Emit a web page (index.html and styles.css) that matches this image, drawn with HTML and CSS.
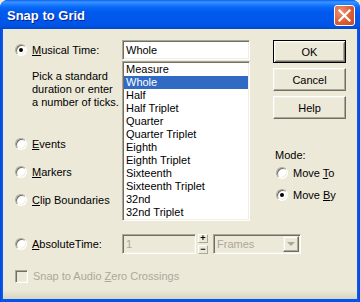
FILE: index.html
```html
<!DOCTYPE html>
<html>
<head>
    <title>Snap to Grid</title>
    <link rel="stylesheet" href="styles.css">
</head>
<body>
    <div class="window">
        <!-- Title bar -->
        <div class="titlebar">
            <span class="title">Snap to Grid</span>
            <button class="close-btn">
                <svg width="19" height="19" viewBox="0 0 19 19">
                    <path d="M4.5 4.5 L14.5 14.5 M14.5 4.5 L4.5 14.5" stroke="#fff" stroke-width="2.2" stroke-linecap="square"/>
                </svg>
            </button>
        </div>

        <!-- Dialog body -->
        <div class="client">
            <div class="main">
                <div class="left-col">
                    <div class="radio-row"><span class="radio checked"></span><span><u>M</u>usical Time:</span></div>
                    <p class="hint">Pick a standard<br>duration or enter<br>a number of ticks.</p>
                    <div class="radio-row events"><span class="radio"></span><span><u>E</u>vents</span></div>
                    <div class="radio-row spaced"><span class="radio"></span><span><u>M</u>arkers</span></div>
                    <div class="radio-row spaced"><span class="radio"></span><span><u>C</u>lip Boundaries</span></div>
                </div>

                <div class="mid-col">
                    <div class="edit">Whole</div>
                    <ul class="listbox">
                        <li>Measure</li>
                        <li class="selected">Whole</li>
                        <li>Half</li>
                        <li>Half Triplet</li>
                        <li>Quarter</li>
                        <li>Quarter Triplet</li>
                        <li>Eighth</li>
                        <li>Eighth Triplet</li>
                        <li>Sixteenth</li>
                        <li>Sixteenth Triplet</li>
                        <li>32nd</li>
                        <li>32nd Triplet</li>
                    </ul>
                </div>

                <div class="right-col">
                    <button class="btn default">OK</button>
                    <button class="btn">Cancel</button>
                    <button class="btn">Help</button>
                    <div class="mode">
                        <div class="mode-label">Mode:</div>
                        <div class="radio-row move-to"><span class="radio"></span><span>Move <u>T</u>o</span></div>
                        <div class="radio-row move-by"><span class="radio checked"></span><span>Move <u>B</u>y</span></div>
                    </div>
                </div>
            </div>

            <div class="abs-row">
                <div class="radio-row abs-label"><span class="radio"></span><span><u>A</u>bsoluteTime:</span></div>
                <div class="spin-edit">1</div>
                <div class="spin">
                    <span class="spin-btn">+</span>
                    <span class="spin-btn">&minus;</span>
                </div>
                <div class="combo">
                    <span class="combo-text">Frames</span>
                    <span class="combo-arrow"><span class="tri"></span></span>
                </div>
            </div>

            <div class="check-row">
                <span class="checkbox"></span>
                <span class="disabled">Snap to Audio <u>Z</u>ero Crossings</span>
            </div>
        </div>
    </div>
</body>
</html>
```

FILE: styles.css
```css
body {
    margin: 0;
    background: #ECE9D8;
    font-family: "Liberation Sans", Arial, sans-serif;
    font-size: 11px;
    color: #000;
}
.window {
    width: 360px;
    height: 302px;
    display: flex;
    flex-direction: column;
    background: linear-gradient(to right, #0841D0 0, #0A5AEE 2px, #0055EA 4px, #0055EA 356px, #0A5AEE 358px, #0841D0 360px);
    border-radius: 8px 8px 0 0;
    overflow: hidden;
}
.titlebar {
    height: 29px;
    flex: none;
    display: flex;
    justify-content: space-between;
    align-items: flex-start;
    padding: 0 5px 0 7px;
    background: linear-gradient(to bottom, #0A5CF0 0, #3C95FF 2px, #2284FF 4px, #0A6AF8 7px, #0059EE 12px, #0056E9 22px, #0053E4 26px, #0047D0 29px);
}
.title {
    margin-top: 8px;
    color: #fff;
    font-weight: bold;
    font-size: 13px;
    line-height: 16px;
    text-shadow: 1px 1px #0A1E8A;
}
.close-btn {
    margin-top: 5px;
    width: 21px;
    height: 21px;
    padding: 0;
    border: 1px solid #fff;
    border-radius: 3px;
    background: radial-gradient(circle at 30% 30%, #EE9372 0%, #DC5E38 55%, #C7461F 100%);
    display: flex;
    align-items: center;
    justify-content: center;
}
.close-btn svg { display: block; }

.client {
    flex: 1;
    margin: 0 3px 3px;
    padding-top: 11px;
    background: linear-gradient(to bottom, #ECE9D8 0, #ECE9D8 calc(100% - 9px), #D9D4C2 100%);
}
.main {
    display: flex;
    align-items: flex-start;
}

/* radios */
.radio-row {
    display: flex;
    align-items: center;
    gap: 5px;
    height: 20px;
    white-space: nowrap;
}
.radio {
    flex: none;
    position: relative;
    width: 12px;
    height: 12px;
    box-sizing: border-box;
    border-radius: 50%;
    background: #fff;
    border: 1px solid;
    border-color: #ACA899 #fff #fff #ACA899;
    box-shadow: inset 1px 1px #716F64, inset -1px -1px #F1EFE2;
}
.radio.checked::after {
    content: "";
    position: absolute;
    left: 3px;
    top: 3px;
    width: 4px;
    height: 4px;
    border-radius: 50%;
    background: #000;
}

.left-col {
    width: 107px;
    margin-left: 12px;
}
.hint {
    margin: 10px 0 0 17px;
    line-height: 13px;
}
.events { margin-top: 25px; }
.spaced { margin-top: 8px; }

/* sunken fields */
.edit, .listbox, .spin-edit, .combo {
    box-sizing: border-box;
    border: 1px solid;
    border-color: #ACA899 #fff #fff #ACA899;
    box-shadow: inset 1px 1px #716F64, inset -1px -1px #F1EFE2;
}
.mid-col { width: 128px; }
.edit {
    height: 20px;
    background: #fff;
    padding: 0 3px;
    line-height: 18px;
}
.listbox {
    margin: 1px 0 0;
    padding: 1px;
    list-style: none;
    height: 160px;
    background: #fff;
}
.listbox li {
    height: 13px;
    line-height: 13px;
    padding-left: 2px;
}
.listbox li.selected {
    background: #316AC5;
    color: #fff;
}

/* buttons */
.right-col {
    width: 73px;
    margin-left: 23px;
}
.btn {
    display: block;
    width: 73px;
    height: 23px;
    box-sizing: border-box;
    margin: 0 0 5px;
    padding: 0;
    font: inherit;
    color: #000;
    background: #ECE9D8;
    border: 1px solid;
    border-color: #fff #716F64 #716F64 #fff;
    box-shadow: inset -1px -1px #ACA899, inset 1px 1px #F1EFE2;
}
.btn.default {
    border-color: #000;
    box-shadow: inset 1px 1px #fff, inset -1px -1px #716F64, inset 2px 2px #F1EFE2, inset -2px -2px #ACA899;
}
.mode { margin-top: 30px; }
.mode-label {
    padding-left: 2px;
    line-height: 13px;
}
.mode .radio-row { padding-left: 3px; }
.move-to { margin-top: 1px; }
.move-by { margin-top: 2px; }

/* absolute time row */
.abs-row {
    display: flex;
    align-items: center;
    height: 20px;
    margin: 13px 0 0 12px;
}
.abs-label { width: 107px; }
.spin-edit {
    width: 74px;
    height: 20px;
    padding-left: 3px;
    line-height: 18px;
    color: #ACA899;
    background: #ECE9D8;
}
.spin {
    width: 10px;
    height: 20px;
    margin-left: 2px;
    display: flex;
    flex-direction: column;
    justify-content: space-between;
}
.spin-btn {
    height: 9px;
    box-sizing: border-box;
    border: 1px solid;
    border-color: #fff #ACA899 #ACA899 #fff;
    font-size: 9px;
    font-weight: bold;
    line-height: 7px;
    text-align: center;
}
.combo {
    width: 88px;
    height: 20px;
    margin-left: 5px;
    padding: 1px;
    display: flex;
    align-items: center;
    justify-content: space-between;
    background: #ECE9D8;
}
.combo-text {
    padding-left: 2px;
    color: #ACA899;
}
.combo-arrow {
    width: 16px;
    height: 16px;
    box-sizing: border-box;
    border: 1px solid;
    border-color: #F1EFE2 #716F64 #716F64 #F1EFE2;
    box-shadow: inset -1px -1px #ACA899, inset 1px 1px #fff;
    display: flex;
    align-items: center;
    justify-content: center;
}
.tri {
    width: 0;
    height: 0;
    border-left: 4px solid transparent;
    border-right: 4px solid transparent;
    border-top: 4px solid #ACA899;
}

/* checkbox row */
.check-row {
    display: flex;
    align-items: center;
    gap: 5px;
    height: 20px;
    margin: 12px 0 0 12px;
}
.checkbox {
    width: 13px;
    height: 13px;
    box-sizing: border-box;
    border: 1px solid;
    border-color: #ACA899 #fff #fff #ACA899;
    box-shadow: inset 1px 1px #716F64, inset -1px -1px #F1EFE2;
    background: #ECE9D8;
}
.disabled { color: #ACA899; }
```
